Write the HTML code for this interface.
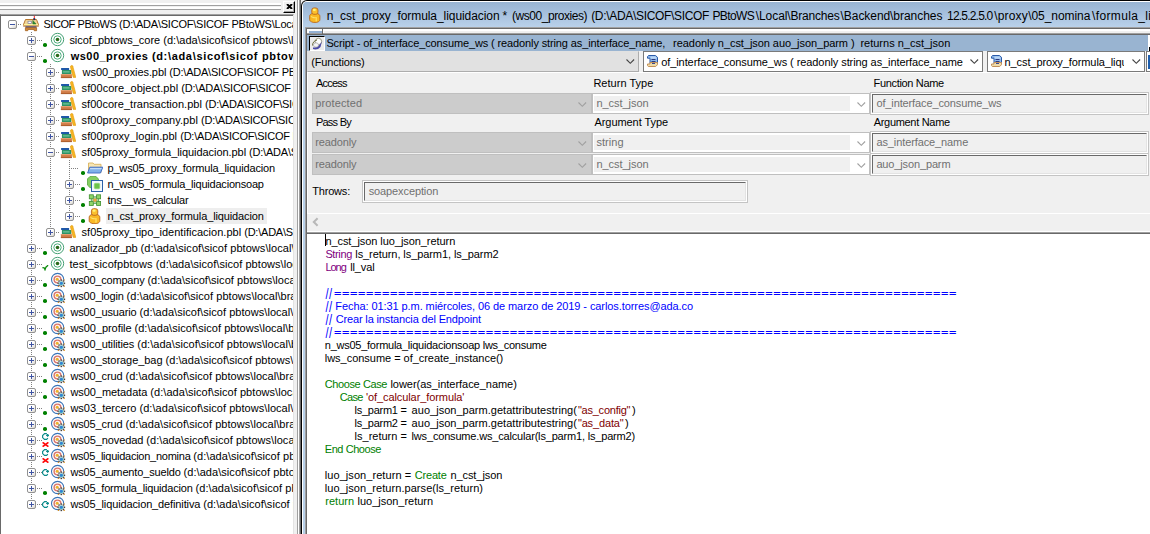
<!DOCTYPE html>
<html lang="es"><head><meta charset="utf-8"><title>PowerBuilder - n_cst_proxy_formula_liquidacion</title>
<style>
html,body{margin:0;padding:0}
body{width:1150px;height:534px;overflow:hidden;position:relative;background:#f0f0f0;font:11px "Liberation Sans",sans-serif;color:#000}
div,svg{position:absolute;box-sizing:border-box}
.t{white-space:pre;line-height:16px;height:16px;font:11px/16px "Liberation Sans",sans-serif}
.b{font-weight:bold}
.s12{font:12px/16px "Liberation Sans",sans-serif}
/* tree */
#tree{left:0;top:14px;width:294px;height:520px;background:#fff;border-top:1px solid #a0a0a0;border-left:1px solid #696969;border-right:1px solid #e3e3e3;overflow:hidden}
#treein{left:-1px;top:-15px;width:294px;height:534px}
.row{left:0;width:293px;height:16px;overflow:hidden}
.ex{width:9px;height:9px;border:1px solid #919191;border-radius:2px;background:linear-gradient(135deg,#fff 0%,#fff 45%,#d9d6cf 100%)}
.ex i{position:absolute;left:1px;top:3px;width:5px;height:1px;background:#3f54a3}
.ex b{position:absolute;left:3px;top:1px;width:1px;height:5px;background:#3f54a3}
.hd{height:1px;background-image:linear-gradient(90deg,#808080 50%,transparent 50%);background-size:2px 1px}
.vd{width:1px;background-image:linear-gradient(180deg,#808080 50%,transparent 50%);background-size:1px 2px}
.dot{width:4px;height:4px;background:#008000;border-radius:1.8px}
.c{line-height:13px;height:13px;font:11px/13px "Liberation Sans",sans-serif}

</style></head>
<body>
<div id="grip" style="left:0;top:0;width:297px;height:14px;background:#f0f0f0"><div style="left:0;top:3px;width:281px;height:3px;background:#fff;border-bottom:1px solid #a0a0a0"></div><div style="left:0;top:7px;width:281px;height:3px;background:#fff;border-bottom:1px solid #a0a0a0"></div><div id="closebtn" style="left:283px;top:1px;width:12px;height:12px;background:#f0f0f0;border-top:1px solid #fff;border-left:1px solid #fff;border-right:1px solid #000;border-bottom:1px solid #000"><div style="left:0;top:0;width:10px;height:10px;border-right:1px solid #a0a0a0;border-bottom:1px solid #a0a0a0"></div><svg style="left:2px;top:2px" width="7" height="5" viewBox="0 0 7 5"><path d="M1 0l5 5M6 0l-5 5" stroke="#000" stroke-width="1.9" fill="none"/></svg></div></div>
<div style="left:297px;top:0;width:1px;height:534px;background:#a0a0a0"></div><div style="left:298px;top:0;width:1px;height:534px;background:#fff"></div><div style="left:299px;top:0;width:1px;height:534px;background:#a0a0a0"></div><div style="left:300px;top:0;width:1px;height:534px;background:#696969"></div>
<div id="tree"><div id="treein">
<div style="left:1px;top:15px;width:292px;height:1px;background:#696969"></div>
<div class="vd" style="left:31px;top:32px;height:472px"></div><div class="vd" style="left:50px;top:64px;height:168px"></div><div class="vd" style="left:69px;top:160px;height:56px"></div>
<div class="hd" style="left:18px;top:24px;width:4px"></div><div class="ex" style="left:8px;top:20px"><i></i></div><svg style="left:22px;top:16px" width="18" height="16" viewBox="0 0 18 16" overflow="visible"><path d="M3.5 3.5h11l2.2 5.6h-15.4z" fill="#f1d596" stroke="#b9772e" stroke-width="1"/><rect x="1.8" y="8" width="14.4" height="1.6" fill="#fdf5a0"/><rect x="1.2" y="9.6" width="15.6" height="1" fill="#b06a28"/><rect x="3.5" y="10.4" width="11" height="1.4" fill="#3a3f7a"/><path d="M3.4 11.8h11.2v2.9h-2.4v-1.2h-6.4v1.2h-2.4z" fill="#d28a3a" stroke="#a5621f" stroke-width="0.8"/><rect x="6" y="5.2" width="3.3" height="2.2" fill="#fff" stroke="#7a7c98" stroke-width="0.7"/><path d="M10.8 8v-3.6l3.3 3.6z" fill="#2f8a3a" stroke="#1f6f1f" stroke-width="0.5"/><rect x="11.8" y="-0.2" width="1" height="2.4" fill="#ff2020"/><rect x="11.3" y="2.1" width="1.9" height="2" fill="#2a2a55"/></svg><div class="t" style="left:43.40px;top:16px"><span style="letter-spacing:-0.431px">SICOF PBtoWS </span><span style="letter-spacing:-0.219px">(D:\ADA\SICOF\SICOF PBtoWS\Local\Branches</span></div>
<div class="hd" style="left:37px;top:40px;width:6px"></div><div class="ex" style="left:27px;top:36px"><i></i><b></b></div><div class="dot" style="left:43px;top:43px"></div><svg style="left:50px;top:32px" width="16" height="16" viewBox="0 0 16 16" ><circle cx="7.5" cy="7.5" r="6.2" fill="#fff" stroke="#3c9b6e" stroke-width="0.95"/><circle cx="7.5" cy="7.5" r="3.7" fill="#fff" stroke="#45aa78" stroke-width="0.95"/><circle cx="7.5" cy="7.5" r="1.8" fill="#2a6a1c"/></svg><div class="t" style="left:69.40px;top:32px"><span style="letter-spacing:-0.021px">sicof_pbtows_core </span><span style="letter-spacing:0.050px">(d:\ada\sicof\sicof pbtows\local\branches\backend</span></div>
<div class="hd" style="left:37px;top:56px;width:6px"></div><div class="ex" style="left:27px;top:52px"><i></i></div><div class="dot" style="left:43px;top:59px"></div><svg style="left:50px;top:48px" width="16" height="16" viewBox="0 0 16 16" ><circle cx="7.5" cy="7.5" r="6.2" fill="#fff" stroke="#3c9b6e" stroke-width="0.95"/><circle cx="7.5" cy="7.5" r="3.7" fill="#fff" stroke="#45aa78" stroke-width="0.95"/><circle cx="7.5" cy="7.5" r="1.8" fill="#2a6a1c"/></svg><div class="t b" style="left:70.80px;top:48px"><span style="letter-spacing:0.452px">ws00_proxies </span><span style="letter-spacing:0.672px">(d:\ada\sicof\sicof pbtows\local\branches\backend</span></div>
<div class="hd" style="left:56px;top:72px;width:4px"></div><div class="ex" style="left:46px;top:68px"><i></i><b></b></div><svg style="left:60px;top:64px" width="16" height="16" viewBox="0 0 16 16" ><g transform="translate(0.6 1)"><rect x="0.5" y="3" width="8" height="2" fill="#1f58a8"/><rect x="1.3" y="5" width="9.4" height="4" fill="#2e9466"/><rect x="2.5" y="6.4" width="6.5" height="1" fill="#7fd0a8"/><rect x="0.3" y="9" width="11" height="4" fill="#cf7a45"/><rect x="0.3" y="9" width="11" height="1.2" fill="#e3a071"/><rect x="0.3" y="12.2" width="11" height="0.9" fill="#a85a2a"/><path d="M10.6 0.6c1.4-0.5 2 0.5 1.8 1.4l2.8 10.4h-2.6l-2.7-10.2c-0.2-0.8 0.1-1.3 0.7-1.6z" fill="#f7b522" stroke="#e09a10" stroke-width="0.6"/></g></svg><div class="t" style="left:82.60px;top:64px"><span style="letter-spacing:-0.080px">ws00_proxies.pbl </span><span style="letter-spacing:-0.219px">(D:\ADA\SICOF\SICOF PBtoWS\Local</span></div>
<div class="hd" style="left:56px;top:88px;width:4px"></div><div class="ex" style="left:46px;top:84px"><i></i><b></b></div><svg style="left:60px;top:80px" width="16" height="16" viewBox="0 0 16 16" ><g transform="translate(0.6 1)"><rect x="0.5" y="3" width="8" height="2" fill="#1f58a8"/><rect x="1.3" y="5" width="9.4" height="4" fill="#2e9466"/><rect x="2.5" y="6.4" width="6.5" height="1" fill="#7fd0a8"/><rect x="0.3" y="9" width="11" height="4" fill="#cf7a45"/><rect x="0.3" y="9" width="11" height="1.2" fill="#e3a071"/><rect x="0.3" y="12.2" width="11" height="0.9" fill="#a85a2a"/><path d="M10.6 0.6c1.4-0.5 2 0.5 1.8 1.4l2.8 10.4h-2.6l-2.7-10.2c-0.2-0.8 0.1-1.3 0.7-1.6z" fill="#f7b522" stroke="#e09a10" stroke-width="0.6"/></g></svg><div class="t" style="left:81.60px;top:80px"><span style="letter-spacing:0.062px">sf00core_object.pbl </span><span style="letter-spacing:-0.219px">(D:\ADA\SICOF\SICOF PBtoWS\Local</span></div>
<div class="hd" style="left:56px;top:104px;width:4px"></div><div class="ex" style="left:46px;top:100px"><i></i><b></b></div><svg style="left:60px;top:96px" width="16" height="16" viewBox="0 0 16 16" ><g transform="translate(0.6 1)"><rect x="0.5" y="3" width="8" height="2" fill="#1f58a8"/><rect x="1.3" y="5" width="9.4" height="4" fill="#2e9466"/><rect x="2.5" y="6.4" width="6.5" height="1" fill="#7fd0a8"/><rect x="0.3" y="9" width="11" height="4" fill="#cf7a45"/><rect x="0.3" y="9" width="11" height="1.2" fill="#e3a071"/><rect x="0.3" y="12.2" width="11" height="0.9" fill="#a85a2a"/><path d="M10.6 0.6c1.4-0.5 2 0.5 1.8 1.4l2.8 10.4h-2.6l-2.7-10.2c-0.2-0.8 0.1-1.3 0.7-1.6z" fill="#f7b522" stroke="#e09a10" stroke-width="0.6"/></g></svg><div class="t" style="left:81.60px;top:96px"><span style="letter-spacing:0.019px">sf00core_transaction.pbl </span><span style="letter-spacing:-0.219px">(D:\ADA\SICOF\SICOF PBtoWS\Local</span></div>
<div class="hd" style="left:56px;top:120px;width:4px"></div><div class="ex" style="left:46px;top:116px"><i></i><b></b></div><svg style="left:60px;top:112px" width="16" height="16" viewBox="0 0 16 16" ><g transform="translate(0.6 1)"><rect x="0.5" y="3" width="8" height="2" fill="#1f58a8"/><rect x="1.3" y="5" width="9.4" height="4" fill="#2e9466"/><rect x="2.5" y="6.4" width="6.5" height="1" fill="#7fd0a8"/><rect x="0.3" y="9" width="11" height="4" fill="#cf7a45"/><rect x="0.3" y="9" width="11" height="1.2" fill="#e3a071"/><rect x="0.3" y="12.2" width="11" height="0.9" fill="#a85a2a"/><path d="M10.6 0.6c1.4-0.5 2 0.5 1.8 1.4l2.8 10.4h-2.6l-2.7-10.2c-0.2-0.8 0.1-1.3 0.7-1.6z" fill="#f7b522" stroke="#e09a10" stroke-width="0.6"/></g></svg><div class="t" style="left:81.60px;top:112px"><span style="letter-spacing:0.044px">sf00proxy_company.pbl </span><span style="letter-spacing:-0.219px">(D:\ADA\SICOF\SICOF PBtoWS\Local</span></div>
<div class="hd" style="left:56px;top:136px;width:4px"></div><div class="ex" style="left:46px;top:132px"><i></i><b></b></div><svg style="left:60px;top:128px" width="16" height="16" viewBox="0 0 16 16" ><g transform="translate(0.6 1)"><rect x="0.5" y="3" width="8" height="2" fill="#1f58a8"/><rect x="1.3" y="5" width="9.4" height="4" fill="#2e9466"/><rect x="2.5" y="6.4" width="6.5" height="1" fill="#7fd0a8"/><rect x="0.3" y="9" width="11" height="4" fill="#cf7a45"/><rect x="0.3" y="9" width="11" height="1.2" fill="#e3a071"/><rect x="0.3" y="12.2" width="11" height="0.9" fill="#a85a2a"/><path d="M10.6 0.6c1.4-0.5 2 0.5 1.8 1.4l2.8 10.4h-2.6l-2.7-10.2c-0.2-0.8 0.1-1.3 0.7-1.6z" fill="#f7b522" stroke="#e09a10" stroke-width="0.6"/></g></svg><div class="t" style="left:81.60px;top:128px"><span style="letter-spacing:0.038px">sf00proxy_login.pbl </span><span style="letter-spacing:-0.219px">(D:\ADA\SICOF\SICOF PBtoWS\Local</span></div>
<div class="hd" style="left:56px;top:152px;width:4px"></div><div class="ex" style="left:46px;top:148px"><i></i></div><svg style="left:60px;top:144px" width="16" height="16" viewBox="0 0 16 16" ><g transform="translate(0.6 1)"><rect x="0.5" y="3" width="8" height="2" fill="#1f58a8"/><rect x="1.3" y="5" width="9.4" height="4" fill="#2e9466"/><rect x="2.5" y="6.4" width="6.5" height="1" fill="#7fd0a8"/><rect x="0.3" y="9" width="11" height="4" fill="#cf7a45"/><rect x="0.3" y="9" width="11" height="1.2" fill="#e3a071"/><rect x="0.3" y="12.2" width="11" height="0.9" fill="#a85a2a"/><path d="M10.6 0.6c1.4-0.5 2 0.5 1.8 1.4l2.8 10.4h-2.6l-2.7-10.2c-0.2-0.8 0.1-1.3 0.7-1.6z" fill="#f7b522" stroke="#e09a10" stroke-width="0.6"/></g></svg><div class="t" style="left:81.60px;top:144px"><span style="letter-spacing:-0.056px">sf05proxy_formula_liquidacion.pbl </span><span style="letter-spacing:-0.219px">(D:\ADA\SICOF\SICOF PBtoWS\Local</span></div>
<div class="hd" style="left:69px;top:168px;width:10px"></div><div class="dot" style="left:81px;top:171px"></div><svg style="left:87px;top:160px" width="16" height="16" viewBox="0 0 16 16" ><path d="M1.5 12.5v-9.5h4.5l1.2 1.3h6.8v8.2z" fill="#f7e6b4" stroke="#d9b25f" stroke-width="0.9"/><path d="M0.6 13l2.2-5.8h13l-2.3 5.8z" fill="#7fb0ea" stroke="#3a66c2" stroke-width="0.9"/><path d="M3.2 8h11.6l-0.5 1.2h-11.6z" fill="#c5dcf7"/></svg><div class="t" style="left:107.4px;top:160px;letter-spacing:-0.129px">p_ws05_proxy_formula_liquidacion</div>
<div class="hd" style="left:75px;top:184px;width:6px"></div><div class="ex" style="left:65px;top:180px"><i></i><b></b></div><div class="dot" style="left:81px;top:187px"></div><svg style="left:87px;top:176px" width="16" height="16" viewBox="0 0 16 16" ><path d="M3 0.4h6l2.4 2.6v6l-2.4 2.6h-6l-2.6-2.6v-6z" fill="#86cf62" stroke="#4fa237" stroke-width="0.8"/><rect x="4.5" y="4.5" width="11" height="11" fill="#f4f8ff" stroke="#2d62a8" stroke-width="1"/><rect x="7.3" y="7.3" width="5.4" height="5.4" rx="1.2" fill="#6cc24a" stroke="#8fd66f" stroke-width="0.8"/></svg><div class="t" style="left:107.4px;top:176px;letter-spacing:-0.212px">n_ws05_formula_liquidacionsoap</div>
<div class="hd" style="left:75px;top:200px;width:6px"></div><div class="ex" style="left:65px;top:196px"><i></i><b></b></div><div class="dot" style="left:81px;top:203px"></div><svg style="left:87px;top:192px" width="16" height="16" viewBox="0 0 16 16" ><path d="M4.3 4.8h7.4M4.3 11.4h7.4M4.3 4.8v6.6M11.6 4.8v6.6M8 4.8v6.6M4.3 8.1h7.4" fill="none" stroke="#4a9a3a" stroke-width="0.8"/><rect x="2.3" y="2.8" width="4" height="4" fill="#8fd46a" stroke="#3f8f2f" stroke-width="0.8"/><rect x="9.6" y="2.8" width="4" height="4" fill="#8fd46a" stroke="#3f8f2f" stroke-width="0.8"/><rect x="2.3" y="9.4" width="4" height="4" fill="#8fd46a" stroke="#3f8f2f" stroke-width="0.8"/><rect x="9.6" y="9.4" width="4" height="4" fill="#8fd46a" stroke="#3f8f2f" stroke-width="0.8"/><rect x="6.8" y="6.9" width="2.4" height="2.4" fill="#f3b13a" stroke="#c9852a" stroke-width="0.5"/></svg><div class="t" style="left:107.4px;top:192px;letter-spacing:-0.214px">tns__ws_calcular</div>
<div class="hd" style="left:75px;top:216px;width:6px"></div><div class="ex" style="left:65px;top:212px"><i></i><b></b></div><div class="dot" style="left:81px;top:219px"></div><svg style="left:87px;top:208px" width="16" height="16" viewBox="0 0 16 16" ><path d="M2.2 9.2c0-1.6 1.6-2.6 3-2.8h4.6c1.6 0.3 3 1.3 3 2.8v3.6c0 1.2-1 2-2 2.4l-1.6 0.5h-3.2l-1.8-0.6c-1.2-0.5-2-1.2-2-2.3z" fill="#f9b824" stroke="#b8651e" stroke-width="0.9"/><path d="M3.4 8.6c1.4 1.6 4 2 6.2 1.4v4.4l-1.2 0.4v-3.6c-2 0.2-3.8-0.3-5-1.5z" fill="#fde26a"/><rect x="4.4" y="0.7" width="6.4" height="6.6" rx="2.2" fill="#fbc02d" stroke="#b8651e" stroke-width="0.9"/><rect x="5.6" y="1.6" width="3" height="2.2" rx="1" fill="#fff27a"/></svg><div style="left:106px;top:208px;width:161px;height:16px;background:#eeeeee"></div><div class="t" style="left:107.4px;top:208px;letter-spacing:-0.123px">n_cst_proxy_formula_liquidacion</div>
<div class="hd" style="left:56px;top:232px;width:4px"></div><div class="ex" style="left:46px;top:228px"><i></i><b></b></div><svg style="left:60px;top:224px" width="16" height="16" viewBox="0 0 16 16" ><g transform="translate(0.6 1)"><rect x="0.5" y="3" width="8" height="2" fill="#1f58a8"/><rect x="1.3" y="5" width="9.4" height="4" fill="#2e9466"/><rect x="2.5" y="6.4" width="6.5" height="1" fill="#7fd0a8"/><rect x="0.3" y="9" width="11" height="4" fill="#cf7a45"/><rect x="0.3" y="9" width="11" height="1.2" fill="#e3a071"/><rect x="0.3" y="12.2" width="11" height="0.9" fill="#a85a2a"/><path d="M10.6 0.6c1.4-0.5 2 0.5 1.8 1.4l2.8 10.4h-2.6l-2.7-10.2c-0.2-0.8 0.1-1.3 0.7-1.6z" fill="#f7b522" stroke="#e09a10" stroke-width="0.6"/></g></svg><div class="t" style="left:81.60px;top:224px"><span style="letter-spacing:0.016px">sf05proxy_tipo_identificacion.pbl </span><span style="letter-spacing:-0.219px">(D:\ADA\SICOF\SICOF PBtoWS\Local</span></div>
<div class="hd" style="left:37px;top:248px;width:6px"></div><div class="ex" style="left:27px;top:244px"><i></i><b></b></div><div class="dot" style="left:43px;top:251px"></div><svg style="left:50px;top:240px" width="16" height="16" viewBox="0 0 16 16" ><circle cx="7.5" cy="7.5" r="6.2" fill="#fff" stroke="#3c9b6e" stroke-width="0.95"/><circle cx="7.5" cy="7.5" r="3.7" fill="#fff" stroke="#45aa78" stroke-width="0.95"/><circle cx="7.5" cy="7.5" r="1.8" fill="#2a6a1c"/></svg><div class="t" style="left:69.40px;top:240px"><span style="letter-spacing:-0.069px">analizador_pb </span><span style="letter-spacing:0.050px">(d:\ada\sicof\sicof pbtows\local\branches\backend</span></div>
<div class="hd" style="left:37px;top:264px;width:6px"></div><div class="ex" style="left:27px;top:260px"><i></i><b></b></div><svg style="left:42px;top:265px" width="7" height="6" viewBox="0 0 7 6" ><path d="M0.4 2.6l1.8 0.2 0.8 2 0.9-2.6 2.2-2" stroke="#0a8a0a" stroke-width="1.2" fill="none"/></svg><svg style="left:50px;top:256px" width="16" height="16" viewBox="0 0 16 16" ><circle cx="7.5" cy="7.5" r="6.2" fill="#fff" stroke="#3c9b6e" stroke-width="0.95"/><circle cx="7.5" cy="7.5" r="3.7" fill="#fff" stroke="#45aa78" stroke-width="0.95"/><circle cx="7.5" cy="7.5" r="1.8" fill="#2a6a1c"/></svg><div class="t" style="left:69.40px;top:256px"><span style="letter-spacing:0.119px">test_sicofpbtows </span><span style="letter-spacing:0.050px">(d:\ada\sicof\sicof pbtows\local\branches\backend</span></div>
<div class="hd" style="left:37px;top:280px;width:6px"></div><div class="ex" style="left:27px;top:276px"><i></i><b></b></div><div class="dot" style="left:43px;top:283px"></div><svg style="left:50px;top:272px" width="16" height="16" viewBox="0 0 16 16" ><circle cx="7.6" cy="7.5" r="6.1" fill="#fff" stroke="#3a74b8" stroke-width="1.1"/><circle cx="7.5" cy="7.5" r="3.4" fill="#fdf1ee" stroke="#d9746a" stroke-width="1.4"/><circle cx="7.2" cy="7.2" r="1.5" fill="#ecb32a"/><g transform="translate(11.3 11.3)"><circle r="3.5" fill="#fff" fill-opacity="0.85"/><rect x="2.30" y="-3.90" width="1.2" height="1.2" fill="#f0a020"/><rect x="-3.50" y="2.50" width="1.2" height="1.2" fill="#f0a020"/><rect x="2.30" y="2.50" width="1.2" height="1.2" fill="#f0a020"/><rect x="2.35" y="-0.75" width="1.5" height="1.5" fill="#3c3c3c"/><rect x="1.44" y="1.44" width="1.5" height="1.5" fill="#4a4040"/><rect x="-0.75" y="2.35" width="1.5" height="1.5" fill="#3c3c3c"/><rect x="-2.94" y="1.44" width="1.5" height="1.5" fill="#4a4040"/><rect x="-3.85" y="-0.75" width="1.5" height="1.5" fill="#3c3c3c"/><rect x="-2.94" y="-2.94" width="1.5" height="1.5" fill="#4a4040"/><rect x="-0.75" y="-3.85" width="1.5" height="1.5" fill="#3c3c3c"/><rect x="1.44" y="-2.94" width="1.5" height="1.5" fill="#4a4040"/><circle r="2.5" fill="#f2f8fa" stroke="#777" stroke-width="0.5"/><circle r="1.9" fill="#3cc0c8"/><circle r="1.2" fill="#3a78d8"/></g></svg><div class="t" style="left:70.40px;top:272px"><span style="letter-spacing:-0.192px">ws00_company </span><span style="letter-spacing:0.050px">(d:\ada\sicof\sicof pbtows\local\branches\backend</span></div>
<div class="hd" style="left:37px;top:296px;width:6px"></div><div class="ex" style="left:27px;top:292px"><i></i><b></b></div><div class="dot" style="left:43px;top:299px"></div><svg style="left:50px;top:288px" width="16" height="16" viewBox="0 0 16 16" ><circle cx="7.6" cy="7.5" r="6.1" fill="#fff" stroke="#3a74b8" stroke-width="1.1"/><circle cx="7.5" cy="7.5" r="3.4" fill="#fdf1ee" stroke="#d9746a" stroke-width="1.4"/><circle cx="7.2" cy="7.2" r="1.5" fill="#ecb32a"/><g transform="translate(11.3 11.3)"><circle r="3.5" fill="#fff" fill-opacity="0.85"/><rect x="2.30" y="-3.90" width="1.2" height="1.2" fill="#f0a020"/><rect x="-3.50" y="2.50" width="1.2" height="1.2" fill="#f0a020"/><rect x="2.30" y="2.50" width="1.2" height="1.2" fill="#f0a020"/><rect x="2.35" y="-0.75" width="1.5" height="1.5" fill="#3c3c3c"/><rect x="1.44" y="1.44" width="1.5" height="1.5" fill="#4a4040"/><rect x="-0.75" y="2.35" width="1.5" height="1.5" fill="#3c3c3c"/><rect x="-2.94" y="1.44" width="1.5" height="1.5" fill="#4a4040"/><rect x="-3.85" y="-0.75" width="1.5" height="1.5" fill="#3c3c3c"/><rect x="-2.94" y="-2.94" width="1.5" height="1.5" fill="#4a4040"/><rect x="-0.75" y="-3.85" width="1.5" height="1.5" fill="#3c3c3c"/><rect x="1.44" y="-2.94" width="1.5" height="1.5" fill="#4a4040"/><circle r="2.5" fill="#f2f8fa" stroke="#777" stroke-width="0.5"/><circle r="1.9" fill="#3cc0c8"/><circle r="1.2" fill="#3a78d8"/></g></svg><div class="t" style="left:70.40px;top:288px"><span style="letter-spacing:-0.172px">ws00_login </span><span style="letter-spacing:0.050px">(d:\ada\sicof\sicof pbtows\local\branches\backend</span></div>
<div class="hd" style="left:37px;top:312px;width:6px"></div><div class="ex" style="left:27px;top:308px"><i></i><b></b></div><div class="dot" style="left:43px;top:315px"></div><svg style="left:50px;top:304px" width="16" height="16" viewBox="0 0 16 16" ><circle cx="7.6" cy="7.5" r="6.1" fill="#fff" stroke="#3a74b8" stroke-width="1.1"/><circle cx="7.5" cy="7.5" r="3.4" fill="#fdf1ee" stroke="#d9746a" stroke-width="1.4"/><circle cx="7.2" cy="7.2" r="1.5" fill="#ecb32a"/><g transform="translate(11.3 11.3)"><circle r="3.5" fill="#fff" fill-opacity="0.85"/><rect x="2.30" y="-3.90" width="1.2" height="1.2" fill="#f0a020"/><rect x="-3.50" y="2.50" width="1.2" height="1.2" fill="#f0a020"/><rect x="2.30" y="2.50" width="1.2" height="1.2" fill="#f0a020"/><rect x="2.35" y="-0.75" width="1.5" height="1.5" fill="#3c3c3c"/><rect x="1.44" y="1.44" width="1.5" height="1.5" fill="#4a4040"/><rect x="-0.75" y="2.35" width="1.5" height="1.5" fill="#3c3c3c"/><rect x="-2.94" y="1.44" width="1.5" height="1.5" fill="#4a4040"/><rect x="-3.85" y="-0.75" width="1.5" height="1.5" fill="#3c3c3c"/><rect x="-2.94" y="-2.94" width="1.5" height="1.5" fill="#4a4040"/><rect x="-0.75" y="-3.85" width="1.5" height="1.5" fill="#3c3c3c"/><rect x="1.44" y="-2.94" width="1.5" height="1.5" fill="#4a4040"/><circle r="2.5" fill="#f2f8fa" stroke="#777" stroke-width="0.5"/><circle r="1.9" fill="#3cc0c8"/><circle r="1.2" fill="#3a78d8"/></g></svg><div class="t" style="left:70.40px;top:304px"><span style="letter-spacing:-0.141px">ws00_usuario </span><span style="letter-spacing:0.050px">(d:\ada\sicof\sicof pbtows\local\branches\backend</span></div>
<div class="hd" style="left:37px;top:328px;width:6px"></div><div class="ex" style="left:27px;top:324px"><i></i><b></b></div><div class="dot" style="left:43px;top:331px"></div><svg style="left:50px;top:320px" width="16" height="16" viewBox="0 0 16 16" ><circle cx="7.6" cy="7.5" r="6.1" fill="#fff" stroke="#3a74b8" stroke-width="1.1"/><circle cx="7.5" cy="7.5" r="3.4" fill="#fdf1ee" stroke="#d9746a" stroke-width="1.4"/><circle cx="7.2" cy="7.2" r="1.5" fill="#ecb32a"/><g transform="translate(11.3 11.3)"><circle r="3.5" fill="#fff" fill-opacity="0.85"/><rect x="2.30" y="-3.90" width="1.2" height="1.2" fill="#f0a020"/><rect x="-3.50" y="2.50" width="1.2" height="1.2" fill="#f0a020"/><rect x="2.30" y="2.50" width="1.2" height="1.2" fill="#f0a020"/><rect x="2.35" y="-0.75" width="1.5" height="1.5" fill="#3c3c3c"/><rect x="1.44" y="1.44" width="1.5" height="1.5" fill="#4a4040"/><rect x="-0.75" y="2.35" width="1.5" height="1.5" fill="#3c3c3c"/><rect x="-2.94" y="1.44" width="1.5" height="1.5" fill="#4a4040"/><rect x="-3.85" y="-0.75" width="1.5" height="1.5" fill="#3c3c3c"/><rect x="-2.94" y="-2.94" width="1.5" height="1.5" fill="#4a4040"/><rect x="-0.75" y="-3.85" width="1.5" height="1.5" fill="#3c3c3c"/><rect x="1.44" y="-2.94" width="1.5" height="1.5" fill="#4a4040"/><circle r="2.5" fill="#f2f8fa" stroke="#777" stroke-width="0.5"/><circle r="1.9" fill="#3cc0c8"/><circle r="1.2" fill="#3a78d8"/></g></svg><div class="t" style="left:70.40px;top:320px"><span style="letter-spacing:-0.056px">ws00_profile </span><span style="letter-spacing:0.050px">(d:\ada\sicof\sicof pbtows\local\branches\backend</span></div>
<div class="hd" style="left:37px;top:344px;width:6px"></div><div class="ex" style="left:27px;top:340px"><i></i><b></b></div><div class="dot" style="left:43px;top:347px"></div><svg style="left:50px;top:336px" width="16" height="16" viewBox="0 0 16 16" ><circle cx="7.6" cy="7.5" r="6.1" fill="#fff" stroke="#3a74b8" stroke-width="1.1"/><circle cx="7.5" cy="7.5" r="3.4" fill="#fdf1ee" stroke="#d9746a" stroke-width="1.4"/><circle cx="7.2" cy="7.2" r="1.5" fill="#ecb32a"/><g transform="translate(11.3 11.3)"><circle r="3.5" fill="#fff" fill-opacity="0.85"/><rect x="2.30" y="-3.90" width="1.2" height="1.2" fill="#f0a020"/><rect x="-3.50" y="2.50" width="1.2" height="1.2" fill="#f0a020"/><rect x="2.30" y="2.50" width="1.2" height="1.2" fill="#f0a020"/><rect x="2.35" y="-0.75" width="1.5" height="1.5" fill="#3c3c3c"/><rect x="1.44" y="1.44" width="1.5" height="1.5" fill="#4a4040"/><rect x="-0.75" y="2.35" width="1.5" height="1.5" fill="#3c3c3c"/><rect x="-2.94" y="1.44" width="1.5" height="1.5" fill="#4a4040"/><rect x="-3.85" y="-0.75" width="1.5" height="1.5" fill="#3c3c3c"/><rect x="-2.94" y="-2.94" width="1.5" height="1.5" fill="#4a4040"/><rect x="-0.75" y="-3.85" width="1.5" height="1.5" fill="#3c3c3c"/><rect x="1.44" y="-2.94" width="1.5" height="1.5" fill="#4a4040"/><circle r="2.5" fill="#f2f8fa" stroke="#777" stroke-width="0.5"/><circle r="1.9" fill="#3cc0c8"/><circle r="1.2" fill="#3a78d8"/></g></svg><div class="t" style="left:70.40px;top:336px"><span style="letter-spacing:-0.112px">ws00_utilities </span><span style="letter-spacing:0.050px">(d:\ada\sicof\sicof pbtows\local\branches\backend</span></div>
<div class="hd" style="left:37px;top:360px;width:6px"></div><div class="ex" style="left:27px;top:356px"><i></i><b></b></div><div class="dot" style="left:43px;top:363px"></div><svg style="left:50px;top:352px" width="16" height="16" viewBox="0 0 16 16" ><circle cx="7.6" cy="7.5" r="6.1" fill="#fff" stroke="#3a74b8" stroke-width="1.1"/><circle cx="7.5" cy="7.5" r="3.4" fill="#fdf1ee" stroke="#d9746a" stroke-width="1.4"/><circle cx="7.2" cy="7.2" r="1.5" fill="#ecb32a"/><g transform="translate(11.3 11.3)"><circle r="3.5" fill="#fff" fill-opacity="0.85"/><rect x="2.30" y="-3.90" width="1.2" height="1.2" fill="#f0a020"/><rect x="-3.50" y="2.50" width="1.2" height="1.2" fill="#f0a020"/><rect x="2.30" y="2.50" width="1.2" height="1.2" fill="#f0a020"/><rect x="2.35" y="-0.75" width="1.5" height="1.5" fill="#3c3c3c"/><rect x="1.44" y="1.44" width="1.5" height="1.5" fill="#4a4040"/><rect x="-0.75" y="2.35" width="1.5" height="1.5" fill="#3c3c3c"/><rect x="-2.94" y="1.44" width="1.5" height="1.5" fill="#4a4040"/><rect x="-3.85" y="-0.75" width="1.5" height="1.5" fill="#3c3c3c"/><rect x="-2.94" y="-2.94" width="1.5" height="1.5" fill="#4a4040"/><rect x="-0.75" y="-3.85" width="1.5" height="1.5" fill="#3c3c3c"/><rect x="1.44" y="-2.94" width="1.5" height="1.5" fill="#4a4040"/><circle r="2.5" fill="#f2f8fa" stroke="#777" stroke-width="0.5"/><circle r="1.9" fill="#3cc0c8"/><circle r="1.2" fill="#3a78d8"/></g></svg><div class="t" style="left:70.40px;top:352px"><span style="letter-spacing:-0.054px">ws00_storage_bag </span><span style="letter-spacing:0.050px">(d:\ada\sicof\sicof pbtows\local\branches\backend</span></div>
<div class="hd" style="left:37px;top:376px;width:6px"></div><div class="ex" style="left:27px;top:372px"><i></i><b></b></div><div class="dot" style="left:43px;top:379px"></div><svg style="left:50px;top:368px" width="16" height="16" viewBox="0 0 16 16" ><circle cx="7.6" cy="7.5" r="6.1" fill="#fff" stroke="#3a74b8" stroke-width="1.1"/><circle cx="7.5" cy="7.5" r="3.4" fill="#fdf1ee" stroke="#d9746a" stroke-width="1.4"/><circle cx="7.2" cy="7.2" r="1.5" fill="#ecb32a"/><g transform="translate(11.3 11.3)"><circle r="3.5" fill="#fff" fill-opacity="0.85"/><rect x="2.30" y="-3.90" width="1.2" height="1.2" fill="#f0a020"/><rect x="-3.50" y="2.50" width="1.2" height="1.2" fill="#f0a020"/><rect x="2.30" y="2.50" width="1.2" height="1.2" fill="#f0a020"/><rect x="2.35" y="-0.75" width="1.5" height="1.5" fill="#3c3c3c"/><rect x="1.44" y="1.44" width="1.5" height="1.5" fill="#4a4040"/><rect x="-0.75" y="2.35" width="1.5" height="1.5" fill="#3c3c3c"/><rect x="-2.94" y="1.44" width="1.5" height="1.5" fill="#4a4040"/><rect x="-3.85" y="-0.75" width="1.5" height="1.5" fill="#3c3c3c"/><rect x="-2.94" y="-2.94" width="1.5" height="1.5" fill="#4a4040"/><rect x="-0.75" y="-3.85" width="1.5" height="1.5" fill="#3c3c3c"/><rect x="1.44" y="-2.94" width="1.5" height="1.5" fill="#4a4040"/><circle r="2.5" fill="#f2f8fa" stroke="#777" stroke-width="0.5"/><circle r="1.9" fill="#3cc0c8"/><circle r="1.2" fill="#3a78d8"/></g></svg><div class="t" style="left:70.40px;top:368px"><span style="letter-spacing:-0.117px">ws00_crud </span><span style="letter-spacing:0.050px">(d:\ada\sicof\sicof pbtows\local\branches\backend</span></div>
<div class="hd" style="left:37px;top:392px;width:6px"></div><div class="ex" style="left:27px;top:388px"><i></i><b></b></div><div class="dot" style="left:43px;top:395px"></div><svg style="left:50px;top:384px" width="16" height="16" viewBox="0 0 16 16" ><circle cx="7.6" cy="7.5" r="6.1" fill="#fff" stroke="#3a74b8" stroke-width="1.1"/><circle cx="7.5" cy="7.5" r="3.4" fill="#fdf1ee" stroke="#d9746a" stroke-width="1.4"/><circle cx="7.2" cy="7.2" r="1.5" fill="#ecb32a"/><g transform="translate(11.3 11.3)"><circle r="3.5" fill="#fff" fill-opacity="0.85"/><rect x="2.30" y="-3.90" width="1.2" height="1.2" fill="#f0a020"/><rect x="-3.50" y="2.50" width="1.2" height="1.2" fill="#f0a020"/><rect x="2.30" y="2.50" width="1.2" height="1.2" fill="#f0a020"/><rect x="2.35" y="-0.75" width="1.5" height="1.5" fill="#3c3c3c"/><rect x="1.44" y="1.44" width="1.5" height="1.5" fill="#4a4040"/><rect x="-0.75" y="2.35" width="1.5" height="1.5" fill="#3c3c3c"/><rect x="-2.94" y="1.44" width="1.5" height="1.5" fill="#4a4040"/><rect x="-3.85" y="-0.75" width="1.5" height="1.5" fill="#3c3c3c"/><rect x="-2.94" y="-2.94" width="1.5" height="1.5" fill="#4a4040"/><rect x="-0.75" y="-3.85" width="1.5" height="1.5" fill="#3c3c3c"/><rect x="1.44" y="-2.94" width="1.5" height="1.5" fill="#4a4040"/><circle r="2.5" fill="#f2f8fa" stroke="#777" stroke-width="0.5"/><circle r="1.9" fill="#3cc0c8"/><circle r="1.2" fill="#3a78d8"/></g></svg><div class="t" style="left:70.40px;top:384px"><span style="letter-spacing:-0.058px">ws00_metadata </span><span style="letter-spacing:0.050px">(d:\ada\sicof\sicof pbtows\local\branches\backend</span></div>
<div class="hd" style="left:37px;top:408px;width:6px"></div><div class="ex" style="left:27px;top:404px"><i></i><b></b></div><div class="dot" style="left:43px;top:411px"></div><svg style="left:50px;top:400px" width="16" height="16" viewBox="0 0 16 16" ><circle cx="7.6" cy="7.5" r="6.1" fill="#fff" stroke="#3a74b8" stroke-width="1.1"/><circle cx="7.5" cy="7.5" r="3.4" fill="#fdf1ee" stroke="#d9746a" stroke-width="1.4"/><circle cx="7.2" cy="7.2" r="1.5" fill="#ecb32a"/><g transform="translate(11.3 11.3)"><circle r="3.5" fill="#fff" fill-opacity="0.85"/><rect x="2.30" y="-3.90" width="1.2" height="1.2" fill="#f0a020"/><rect x="-3.50" y="2.50" width="1.2" height="1.2" fill="#f0a020"/><rect x="2.30" y="2.50" width="1.2" height="1.2" fill="#f0a020"/><rect x="2.35" y="-0.75" width="1.5" height="1.5" fill="#3c3c3c"/><rect x="1.44" y="1.44" width="1.5" height="1.5" fill="#4a4040"/><rect x="-0.75" y="2.35" width="1.5" height="1.5" fill="#3c3c3c"/><rect x="-2.94" y="1.44" width="1.5" height="1.5" fill="#4a4040"/><rect x="-3.85" y="-0.75" width="1.5" height="1.5" fill="#3c3c3c"/><rect x="-2.94" y="-2.94" width="1.5" height="1.5" fill="#4a4040"/><rect x="-0.75" y="-3.85" width="1.5" height="1.5" fill="#3c3c3c"/><rect x="1.44" y="-2.94" width="1.5" height="1.5" fill="#4a4040"/><circle r="2.5" fill="#f2f8fa" stroke="#777" stroke-width="0.5"/><circle r="1.9" fill="#3cc0c8"/><circle r="1.2" fill="#3a78d8"/></g></svg><div class="t" style="left:70.40px;top:400px"><span style="letter-spacing:0.000px">ws03_tercero </span><span style="letter-spacing:0.050px">(d:\ada\sicof\sicof pbtows\local\branches\backend</span></div>
<div class="hd" style="left:37px;top:424px;width:6px"></div><div class="ex" style="left:27px;top:420px"><i></i><b></b></div><div class="dot" style="left:43px;top:427px"></div><svg style="left:50px;top:416px" width="16" height="16" viewBox="0 0 16 16" ><circle cx="7.6" cy="7.5" r="6.1" fill="#fff" stroke="#3a74b8" stroke-width="1.1"/><circle cx="7.5" cy="7.5" r="3.4" fill="#fdf1ee" stroke="#d9746a" stroke-width="1.4"/><circle cx="7.2" cy="7.2" r="1.5" fill="#ecb32a"/><g transform="translate(11.3 11.3)"><circle r="3.5" fill="#fff" fill-opacity="0.85"/><rect x="2.30" y="-3.90" width="1.2" height="1.2" fill="#f0a020"/><rect x="-3.50" y="2.50" width="1.2" height="1.2" fill="#f0a020"/><rect x="2.30" y="2.50" width="1.2" height="1.2" fill="#f0a020"/><rect x="2.35" y="-0.75" width="1.5" height="1.5" fill="#3c3c3c"/><rect x="1.44" y="1.44" width="1.5" height="1.5" fill="#4a4040"/><rect x="-0.75" y="2.35" width="1.5" height="1.5" fill="#3c3c3c"/><rect x="-2.94" y="1.44" width="1.5" height="1.5" fill="#4a4040"/><rect x="-3.85" y="-0.75" width="1.5" height="1.5" fill="#3c3c3c"/><rect x="-2.94" y="-2.94" width="1.5" height="1.5" fill="#4a4040"/><rect x="-0.75" y="-3.85" width="1.5" height="1.5" fill="#3c3c3c"/><rect x="1.44" y="-2.94" width="1.5" height="1.5" fill="#4a4040"/><circle r="2.5" fill="#f2f8fa" stroke="#777" stroke-width="0.5"/><circle r="1.9" fill="#3cc0c8"/><circle r="1.2" fill="#3a78d8"/></g></svg><div class="t" style="left:70.40px;top:416px"><span style="letter-spacing:-0.117px">ws05_crud </span><span style="letter-spacing:0.050px">(d:\ada\sicof\sicof pbtows\local\branches\backend</span></div>
<div class="hd" style="left:37px;top:440px;width:6px"></div><div class="ex" style="left:27px;top:436px"><i></i><b></b></div><svg style="left:42px;top:433px" width="7" height="7" viewBox="0 0 7 7" ><path d="M4.9 0.6H2.6L0.6 2.5V4.6L2.5 6.4H4.6L5.9 5.1" fill="none" stroke="#0a8a8a" stroke-width="1.15"/><path d="M4.1 2.4h2.9M5.6 1v2.8" stroke="#0a8a8a" stroke-width="1.3" fill="none"/></svg><svg style="left:42px;top:442px" width="7" height="5" viewBox="0 0 7 5" ><path d="M0.6 0.4L6.4 4.6M6.4 0.4L0.6 4.6" stroke="#ff0808" stroke-width="1.7" fill="none"/></svg><svg style="left:50px;top:432px" width="16" height="16" viewBox="0 0 16 16" ><circle cx="7.6" cy="7.5" r="6.1" fill="#fff" stroke="#3a74b8" stroke-width="1.1"/><circle cx="7.5" cy="7.5" r="3.4" fill="#fdf1ee" stroke="#d9746a" stroke-width="1.4"/><circle cx="7.2" cy="7.2" r="1.5" fill="#ecb32a"/><g transform="translate(11.3 11.3)"><circle r="3.5" fill="#fff" fill-opacity="0.85"/><rect x="2.30" y="-3.90" width="1.2" height="1.2" fill="#f0a020"/><rect x="-3.50" y="2.50" width="1.2" height="1.2" fill="#f0a020"/><rect x="2.30" y="2.50" width="1.2" height="1.2" fill="#f0a020"/><rect x="2.35" y="-0.75" width="1.5" height="1.5" fill="#3c3c3c"/><rect x="1.44" y="1.44" width="1.5" height="1.5" fill="#4a4040"/><rect x="-0.75" y="2.35" width="1.5" height="1.5" fill="#3c3c3c"/><rect x="-2.94" y="1.44" width="1.5" height="1.5" fill="#4a4040"/><rect x="-3.85" y="-0.75" width="1.5" height="1.5" fill="#3c3c3c"/><rect x="-2.94" y="-2.94" width="1.5" height="1.5" fill="#4a4040"/><rect x="-0.75" y="-3.85" width="1.5" height="1.5" fill="#3c3c3c"/><rect x="1.44" y="-2.94" width="1.5" height="1.5" fill="#4a4040"/><circle r="2.5" fill="#f2f8fa" stroke="#777" stroke-width="0.5"/><circle r="1.9" fill="#3cc0c8"/><circle r="1.2" fill="#3a78d8"/></g></svg><div class="t" style="left:70.40px;top:432px"><span style="letter-spacing:-0.089px">ws05_novedad </span><span style="letter-spacing:0.050px">(d:\ada\sicof\sicof pbtows\local\branches\backend</span></div>
<div class="hd" style="left:37px;top:456px;width:6px"></div><div class="ex" style="left:27px;top:452px"><i></i><b></b></div><svg style="left:42px;top:449px" width="7" height="7" viewBox="0 0 7 7" ><path d="M4.9 0.6H2.6L0.6 2.5V4.6L2.5 6.4H4.6L5.9 5.1" fill="none" stroke="#0a8a8a" stroke-width="1.15"/><path d="M4.1 2.4h2.9M5.6 1v2.8" stroke="#0a8a8a" stroke-width="1.3" fill="none"/></svg><svg style="left:42px;top:458px" width="7" height="5" viewBox="0 0 7 5" ><path d="M0.6 0.4L6.4 4.6M6.4 0.4L0.6 4.6" stroke="#ff0808" stroke-width="1.7" fill="none"/></svg><svg style="left:50px;top:448px" width="16" height="16" viewBox="0 0 16 16" ><circle cx="7.6" cy="7.5" r="6.1" fill="#fff" stroke="#3a74b8" stroke-width="1.1"/><circle cx="7.5" cy="7.5" r="3.4" fill="#fdf1ee" stroke="#d9746a" stroke-width="1.4"/><circle cx="7.2" cy="7.2" r="1.5" fill="#ecb32a"/><g transform="translate(11.3 11.3)"><circle r="3.5" fill="#fff" fill-opacity="0.85"/><rect x="2.30" y="-3.90" width="1.2" height="1.2" fill="#f0a020"/><rect x="-3.50" y="2.50" width="1.2" height="1.2" fill="#f0a020"/><rect x="2.30" y="2.50" width="1.2" height="1.2" fill="#f0a020"/><rect x="2.35" y="-0.75" width="1.5" height="1.5" fill="#3c3c3c"/><rect x="1.44" y="1.44" width="1.5" height="1.5" fill="#4a4040"/><rect x="-0.75" y="2.35" width="1.5" height="1.5" fill="#3c3c3c"/><rect x="-2.94" y="1.44" width="1.5" height="1.5" fill="#4a4040"/><rect x="-3.85" y="-0.75" width="1.5" height="1.5" fill="#3c3c3c"/><rect x="-2.94" y="-2.94" width="1.5" height="1.5" fill="#4a4040"/><rect x="-0.75" y="-3.85" width="1.5" height="1.5" fill="#3c3c3c"/><rect x="1.44" y="-2.94" width="1.5" height="1.5" fill="#4a4040"/><circle r="2.5" fill="#f2f8fa" stroke="#777" stroke-width="0.5"/><circle r="1.9" fill="#3cc0c8"/><circle r="1.2" fill="#3a78d8"/></g></svg><div class="t" style="left:70.40px;top:448px"><span style="letter-spacing:-0.255px">ws05_liquidacion_nomina </span><span style="letter-spacing:0.050px">(d:\ada\sicof\sicof pbtows\local\branches\backend</span></div>
<div class="hd" style="left:37px;top:472px;width:6px"></div><div class="ex" style="left:27px;top:468px"><i></i><b></b></div><svg style="left:42px;top:468.6px" width="7" height="7" viewBox="0 0 7 7" ><path d="M4.9 0.6H2.6L0.6 2.5V4.6L2.5 6.4H4.6L5.9 5.1" fill="none" stroke="#0a8a8a" stroke-width="1.15"/><path d="M4.1 2.4h2.9M5.6 1v2.8" stroke="#0a8a8a" stroke-width="1.3" fill="none"/></svg><svg style="left:50px;top:464px" width="16" height="16" viewBox="0 0 16 16" ><circle cx="7.6" cy="7.5" r="6.1" fill="#fff" stroke="#3a74b8" stroke-width="1.1"/><circle cx="7.5" cy="7.5" r="3.4" fill="#fdf1ee" stroke="#d9746a" stroke-width="1.4"/><circle cx="7.2" cy="7.2" r="1.5" fill="#ecb32a"/><g transform="translate(11.3 11.3)"><circle r="3.5" fill="#fff" fill-opacity="0.85"/><rect x="2.30" y="-3.90" width="1.2" height="1.2" fill="#f0a020"/><rect x="-3.50" y="2.50" width="1.2" height="1.2" fill="#f0a020"/><rect x="2.30" y="2.50" width="1.2" height="1.2" fill="#f0a020"/><rect x="2.35" y="-0.75" width="1.5" height="1.5" fill="#3c3c3c"/><rect x="1.44" y="1.44" width="1.5" height="1.5" fill="#4a4040"/><rect x="-0.75" y="2.35" width="1.5" height="1.5" fill="#3c3c3c"/><rect x="-2.94" y="1.44" width="1.5" height="1.5" fill="#4a4040"/><rect x="-3.85" y="-0.75" width="1.5" height="1.5" fill="#3c3c3c"/><rect x="-2.94" y="-2.94" width="1.5" height="1.5" fill="#4a4040"/><rect x="-0.75" y="-3.85" width="1.5" height="1.5" fill="#3c3c3c"/><rect x="1.44" y="-2.94" width="1.5" height="1.5" fill="#4a4040"/><circle r="2.5" fill="#f2f8fa" stroke="#777" stroke-width="0.5"/><circle r="1.9" fill="#3cc0c8"/><circle r="1.2" fill="#3a78d8"/></g></svg><div class="t" style="left:70.40px;top:464px"><span style="letter-spacing:-0.150px">ws05_aumento_sueldo </span><span style="letter-spacing:0.050px">(d:\ada\sicof\sicof pbtows\local\branches\backend</span></div>
<div class="hd" style="left:37px;top:488px;width:6px"></div><div class="ex" style="left:27px;top:484px"><i></i><b></b></div><div class="dot" style="left:43px;top:491px"></div><svg style="left:50px;top:480px" width="16" height="16" viewBox="0 0 16 16" ><circle cx="7.6" cy="7.5" r="6.1" fill="#fff" stroke="#3a74b8" stroke-width="1.1"/><circle cx="7.5" cy="7.5" r="3.4" fill="#fdf1ee" stroke="#d9746a" stroke-width="1.4"/><circle cx="7.2" cy="7.2" r="1.5" fill="#ecb32a"/><g transform="translate(11.3 11.3)"><circle r="3.5" fill="#fff" fill-opacity="0.85"/><rect x="2.30" y="-3.90" width="1.2" height="1.2" fill="#f0a020"/><rect x="-3.50" y="2.50" width="1.2" height="1.2" fill="#f0a020"/><rect x="2.30" y="2.50" width="1.2" height="1.2" fill="#f0a020"/><rect x="2.35" y="-0.75" width="1.5" height="1.5" fill="#3c3c3c"/><rect x="1.44" y="1.44" width="1.5" height="1.5" fill="#4a4040"/><rect x="-0.75" y="2.35" width="1.5" height="1.5" fill="#3c3c3c"/><rect x="-2.94" y="1.44" width="1.5" height="1.5" fill="#4a4040"/><rect x="-3.85" y="-0.75" width="1.5" height="1.5" fill="#3c3c3c"/><rect x="-2.94" y="-2.94" width="1.5" height="1.5" fill="#4a4040"/><rect x="-0.75" y="-3.85" width="1.5" height="1.5" fill="#3c3c3c"/><rect x="1.44" y="-2.94" width="1.5" height="1.5" fill="#4a4040"/><circle r="2.5" fill="#f2f8fa" stroke="#777" stroke-width="0.5"/><circle r="1.9" fill="#3cc0c8"/><circle r="1.2" fill="#3a78d8"/></g></svg><div class="t" style="left:70.40px;top:480px"><span style="letter-spacing:-0.178px">ws05_formula_liquidacion </span><span style="letter-spacing:0.050px">(d:\ada\sicof\sicof pbtows\local\branches\backend</span></div>
<div class="hd" style="left:37px;top:504px;width:6px"></div><div class="ex" style="left:27px;top:500px"><i></i><b></b></div><svg style="left:42px;top:500.6px" width="7" height="7" viewBox="0 0 7 7" ><path d="M4.9 0.6H2.6L0.6 2.5V4.6L2.5 6.4H4.6L5.9 5.1" fill="none" stroke="#0a8a8a" stroke-width="1.15"/><path d="M4.1 2.4h2.9M5.6 1v2.8" stroke="#0a8a8a" stroke-width="1.3" fill="none"/></svg><svg style="left:50px;top:496px" width="16" height="16" viewBox="0 0 16 16" ><circle cx="7.6" cy="7.5" r="6.1" fill="#fff" stroke="#3a74b8" stroke-width="1.1"/><circle cx="7.5" cy="7.5" r="3.4" fill="#fdf1ee" stroke="#d9746a" stroke-width="1.4"/><circle cx="7.2" cy="7.2" r="1.5" fill="#ecb32a"/><g transform="translate(11.3 11.3)"><circle r="3.5" fill="#fff" fill-opacity="0.85"/><rect x="2.30" y="-3.90" width="1.2" height="1.2" fill="#f0a020"/><rect x="-3.50" y="2.50" width="1.2" height="1.2" fill="#f0a020"/><rect x="2.30" y="2.50" width="1.2" height="1.2" fill="#f0a020"/><rect x="2.35" y="-0.75" width="1.5" height="1.5" fill="#3c3c3c"/><rect x="1.44" y="1.44" width="1.5" height="1.5" fill="#4a4040"/><rect x="-0.75" y="2.35" width="1.5" height="1.5" fill="#3c3c3c"/><rect x="-2.94" y="1.44" width="1.5" height="1.5" fill="#4a4040"/><rect x="-3.85" y="-0.75" width="1.5" height="1.5" fill="#3c3c3c"/><rect x="-2.94" y="-2.94" width="1.5" height="1.5" fill="#4a4040"/><rect x="-0.75" y="-3.85" width="1.5" height="1.5" fill="#3c3c3c"/><rect x="1.44" y="-2.94" width="1.5" height="1.5" fill="#4a4040"/><circle r="2.5" fill="#f2f8fa" stroke="#777" stroke-width="0.5"/><circle r="1.9" fill="#3cc0c8"/><circle r="1.2" fill="#3a78d8"/></g></svg><div class="t" style="left:70.40px;top:496px"><span style="letter-spacing:-0.128px">ws05_liquidacion_definitiva </span><span style="letter-spacing:0.050px">(d:\ada\sicof\sicof pbtows\local\branches\backend</span></div>
</div></div>
<div id="win" style="left:301px;top:0;width:849px;height:534px;background:#000;border-top-left-radius:6px;overflow:hidden"><div style="left:1px;top:1px;width:848px;height:533px;background:#fff;border-top-left-radius:5px;overflow:hidden"><div style="left:1px;top:1px;width:847px;height:532px;background:#b9d1ea;border-top-left-radius:4px;overflow:hidden"><div style="left:0;top:0;width:847px;height:25px;background:linear-gradient(180deg,#98b4d2 0%,#a6c0dd 45%,#b9d1ea 100%)"></div></div></div></div>
<svg style="left:308px;top:7px" width="14" height="16" viewBox="0.5 0 14.5 16" ><path d="M2.2 9.2c0-1.6 1.6-2.6 3-2.8h4.6c1.6 0.3 3 1.3 3 2.8v3.6c0 1.2-1 2-2 2.4l-1.6 0.5h-3.2l-1.8-0.6c-1.2-0.5-2-1.2-2-2.3z" fill="#f9b824" stroke="#b8651e" stroke-width="0.9"/><path d="M3.4 8.6c1.4 1.6 4 2 6.2 1.4v4.4l-1.2 0.4v-3.6c-2 0.2-3.8-0.3-5-1.5z" fill="#fde26a"/><rect x="4.4" y="0.7" width="6.4" height="6.6" rx="2.2" fill="#fbc02d" stroke="#b8651e" stroke-width="0.9"/><rect x="5.6" y="1.6" width="3" height="2.2" rx="1" fill="#fff27a"/></svg><div id="wtitle" style="left:303px;top:2px;width:847px;height:25px;overflow:hidden"><div class="t s12" style="left:23.80px;top:6px;letter-spacing:-0.064px">n_cst_proxy_formula_liquidacion</div><div class="t s12" style="left:208.90px;top:6px;letter-spacing:-0.437px">(ws00_proxies)</div><div class="t s12" style="left:288.20px;top:6px;letter-spacing:-0.321px">(D:\ADA\SICOF\SICOF</div><div class="t s12" style="left:409.40px;top:6px;letter-spacing:-0.611px">PBtoWS</div><div class="t s12" style="left:452.70px;top:6px;letter-spacing:-0.053px">\Local</div><div class="t s12" style="left:484.30px;top:6px;letter-spacing:-0.204px">\Branches</div><div class="t s12" style="left:537.50px;top:6px;letter-spacing:-0.039px">\Backend</div><div class="t s12" style="left:587.00px;top:6px;letter-spacing:-0.025px">\branches</div><div class="t s12" style="left:644.00px;top:6px;letter-spacing:-0.791px">12.5.2.5.0</div><div class="t s12" style="left:691.20px;top:6px;letter-spacing:0.163px">\proxy</div><div class="t s12" style="left:725.20px;top:6px;letter-spacing:-0.061px">\05_nomina</div><div class="t s12" style="left:789.00px;top:6px;letter-spacing:0.361px">\formula_li</div><div class="t s12" style="left:199.39999999999998px;top:6px">*</div></div>
<div id="client" style="left:305px;top:27px;width:845px;height:507px;background:#f0f0f0;border-left:1px solid #a0a0a0;border-top:1px solid #a0a0a0;overflow:hidden"><div id="clientin" style="left:-306px;top:-28px;width:1150px;height:534px">
<div style="left:306px;top:28px;width:844px;height:1px;background:#696969"></div><div style="left:306px;top:28px;width:1px;height:506px;background:#696969"></div>
<div style="left:307px;top:29px;width:843px;height:2px;background:#fff"></div><div style="left:307px;top:31px;width:2px;height:2px;background:#fff"></div><div style="left:309px;top:31px;width:13px;height:2px;background:#95b2d4"></div><div style="left:323px;top:31px;width:1px;height:2px;background:#fff"></div><div style="left:307px;top:33px;width:843px;height:1px;background:#a0a0a0"></div><div style="left:307px;top:34px;width:843px;height:1px;background:#696969"></div><div style="left:322px;top:29px;width:1px;height:5px;background:#696969"></div>
<div id="stitle" style="left:307px;top:35px;width:841px;height:16px;background:#99b4d1"></div><div style="left:1148px;top:35px;width:2px;height:16px;background:#fff"></div><div style="left:1149px;top:47px;width:1px;height:4px;background:#000"></div><div style="left:309px;top:36px;width:16px;height:15px;background:#ececec;border-top:1px solid #000;border-left:1px solid #000;border-right:1px solid #fff;border-bottom:1px solid #fff"></div><svg style="left:311px;top:37px" width="13" height="13" viewBox="0 0 13 13" ><circle cx="7.5" cy="4.5" r="3.2" fill="#fff" stroke="#8a8a6a" stroke-width="0.8"/><path d="M1.5 8.5c0-3 2-5 4.5-5.5" fill="none" stroke="#6b6b3a" stroke-width="1"/><path d="M2 10.5c3 0.5 7-2 9-6.5l-1.5 6c-2 2.5-5.5 3-7.5 2z" fill="#4a4aa8"/><ellipse cx="5" cy="8" rx="2.6" ry="2.2" fill="#f4f4f4" stroke="#9a9a9a" stroke-width="0.6"/></svg><div class="t" style="left:326.4px;top:35px;letter-spacing:-0.123px">Script - of_interface_consume_ws ( readonly string as_interface_name,</div><div class="t" style="left:673.1px;top:35px;letter-spacing:-0.056px">readonly n_cst_json auo_json_parm )</div><div class="t" style="left:860.4px;top:35px;letter-spacing:0.002px">returns n_cst_json</div>
<div style="left:307px;top:51px;width:332px;height:21px;background:#e1e1e1;border:1px solid #adadad;border-top-color:#e1e1e1;border-left-color:#e1e1e1"></div><div class="t" style="left:311.2px;top:54px;letter-spacing:-0.157px">(Functions)</div><svg style="left:626px;top:59px" width="9" height="6" viewBox="0 0 9 6" ><path d="M0.5 0.5l3.8 3.8 3.8-3.8" fill="none" stroke="#444" stroke-width="1.1"/></svg><div style="left:643px;top:51px;width:340px;height:21px;background:#fff;border:1px solid #7a7a7a"></div><svg style="left:647px;top:55px" width="11" height="12" viewBox="0 0 11 12" ><path d="M1.5 0.5h7l2 1.8v6.2h-7.5v-5.3h-2.5v-1.5z" fill="#8fb8ea" stroke="#2a5aa8" stroke-width="1"/><path d="M3.6 1.4h4.6l1.4 1.3v1h-6z" fill="#b9d6f6"/><path d="M4.5 4.5h4M4.5 6.5h4" stroke="#2a3a80" stroke-width="1"/><path d="M3 7.5h7.5v2.2l-1.8 1.8h-7.4l-0.8-1v-1.5h2.5z" fill="#f0dca8" stroke="#c2915a" stroke-width="1"/><path d="M5 8.5h3" stroke="#3a4a90" stroke-width="1"/></svg><div class="t" style="left:661.2px;top:54px;letter-spacing:-0.08px">of_interface_consume_ws ( readonly string as_interface_name</div><svg style="left:970px;top:59px" width="9" height="6" viewBox="0 0 9 6" ><path d="M0.5 0.5l3.8 3.8 3.8-3.8" fill="none" stroke="#444" stroke-width="1.1"/></svg><div style="left:987px;top:51px;width:158px;height:21px;background:#fff;border:1px solid #7a7a7a"></div><svg style="left:991px;top:55px" width="11" height="12" viewBox="0 0 11 12" ><path d="M1.5 0.5h7l2 1.8v6.2h-7.5v-5.3h-2.5v-1.5z" fill="#8fb8ea" stroke="#2a5aa8" stroke-width="1"/><path d="M3.6 1.4h4.6l1.4 1.3v1h-6z" fill="#b9d6f6"/><path d="M4.5 4.5h4M4.5 6.5h4" stroke="#2a3a80" stroke-width="1"/><path d="M3 7.5h7.5v2.2l-1.8 1.8h-7.4l-0.8-1v-1.5h2.5z" fill="#f0dca8" stroke="#c2915a" stroke-width="1"/><path d="M5 8.5h3" stroke="#3a4a90" stroke-width="1"/></svg><div style="left:1003px;top:53px;width:121px;height:18px;overflow:hidden"><div class="t" style="left:1.6px;top:1px;letter-spacing:-0.103px">n_cst_proxy_formula_liquidacion</div></div><svg style="left:1132px;top:59px" width="9" height="6" viewBox="0 0 9 6" ><path d="M0.5 0.5l3.8 3.8 3.8-3.8" fill="none" stroke="#444" stroke-width="1.1"/></svg><div style="left:1146px;top:51px;width:10px;height:21px;background:#fff;border:1px solid #7a7a7a"></div><div style="left:1148px;top:55px;width:4px;height:14px;background:#1f5fae"></div>
<div style="left:307px;top:72px;width:843px;height:1px;background:#fff"></div><div style="left:307px;top:72px;width:1px;height:141px;background:#fff"></div>
<div class="t" style="left:315.9px;top:75px;letter-spacing:-0.754px">Access</div><div class="t" style="left:593.4px;top:75px;letter-spacing:0.018px">Return Type</div><div class="t" style="left:873.6px;top:75px;letter-spacing:-0.34px">Function Name</div><div class="t" style="left:315.9px;top:114px;letter-spacing:-0.743px">Pass By</div><div class="t" style="left:594.5px;top:114px;letter-spacing:-0.066px">Argument Type</div><div class="t" style="left:873.7px;top:114px;letter-spacing:-0.306px">Argument Name</div><div class="t" style="left:312.2px;top:183px;letter-spacing:-0.178px">Throws:</div>
<div style="left:312px;top:93px;width:280px;height:21px;background:#cccccc;border:1px solid #bfbfbf"></div><div class="t" style="left:315.3px;top:95px;letter-spacing:0.118px;color:#707070">protected</div><svg style="left:578px;top:102px" width="9" height="6" viewBox="0 0 9 6" ><path d="M0.5 0.5l3.8 3.8 3.8-3.8" fill="none" stroke="#a0a0a0" stroke-width="1.1"/></svg><div style="left:592px;top:93px;width:278px;height:21px;background:#fff;border:1px solid #bfbfbf"></div><div style="left:594px;top:96px;width:256px;height:15px;background:#f0f0f0"></div><div class="t" style="left:596.4px;top:95px;letter-spacing:-0.042px;color:#707070">n_cst_json</div><svg style="left:857px;top:102px" width="9" height="6" viewBox="0 0 9 6" ><path d="M0.5 0.5l3.8 3.8 3.8-3.8" fill="none" stroke="#a0a0a0" stroke-width="1.1"/></svg><div style="left:870px;top:92px;width:279px;height:23px;background:#fff;border:1px solid #c4c4c4"></div><div style="left:872px;top:94px;width:275px;height:19px;background:#f0f0f0;border-top:1px solid #696969;border-left:1px solid #696969;border-right:1px solid #e3e3e3;border-bottom:1px solid #e3e3e3"></div><div class="t" style="left:876.4px;top:95px;letter-spacing:-0.123px;color:#707070">of_interface_consume_ws</div>
<div style="left:312px;top:132px;width:280px;height:21px;background:#cccccc;border:1px solid #bfbfbf"></div><div class="t" style="left:315.3px;top:134px;letter-spacing:-0.143px;color:#707070">readonly</div><svg style="left:578px;top:141px" width="9" height="6" viewBox="0 0 9 6" ><path d="M0.5 0.5l3.8 3.8 3.8-3.8" fill="none" stroke="#a0a0a0" stroke-width="1.1"/></svg><div style="left:592px;top:132px;width:278px;height:21px;background:#fff;border:1px solid #bfbfbf"></div><div style="left:594px;top:135px;width:256px;height:15px;background:#f0f0f0"></div><div class="t" style="left:596.4px;top:134px;letter-spacing:0.042px;color:#707070">string</div><svg style="left:857px;top:141px" width="9" height="6" viewBox="0 0 9 6" ><path d="M0.5 0.5l3.8 3.8 3.8-3.8" fill="none" stroke="#a0a0a0" stroke-width="1.1"/></svg><div style="left:870px;top:131px;width:279px;height:23px;background:#fff;border:1px solid #c4c4c4"></div><div style="left:872px;top:133px;width:275px;height:19px;background:#f0f0f0;border-top:1px solid #696969;border-left:1px solid #696969;border-right:1px solid #e3e3e3;border-bottom:1px solid #e3e3e3"></div><div class="t" style="left:876.4px;top:134px;letter-spacing:-0.103px;color:#707070">as_interface_name</div>
<div style="left:312px;top:154px;width:280px;height:21px;background:#cccccc;border:1px solid #bfbfbf"></div><div class="t" style="left:315.3px;top:156px;letter-spacing:-0.143px;color:#707070">readonly</div><svg style="left:578px;top:163px" width="9" height="6" viewBox="0 0 9 6" ><path d="M0.5 0.5l3.8 3.8 3.8-3.8" fill="none" stroke="#a0a0a0" stroke-width="1.1"/></svg><div style="left:592px;top:154px;width:278px;height:21px;background:#fff;border:1px solid #bfbfbf"></div><div style="left:594px;top:157px;width:256px;height:15px;background:#f0f0f0"></div><div class="t" style="left:596.4px;top:156px;letter-spacing:-0.042px;color:#707070">n_cst_json</div><svg style="left:857px;top:163px" width="9" height="6" viewBox="0 0 9 6" ><path d="M0.5 0.5l3.8 3.8 3.8-3.8" fill="none" stroke="#a0a0a0" stroke-width="1.1"/></svg><div style="left:870px;top:153px;width:279px;height:23px;background:#fff;border:1px solid #c4c4c4"></div><div style="left:872px;top:155px;width:275px;height:19px;background:#f0f0f0;border-top:1px solid #696969;border-left:1px solid #696969;border-right:1px solid #e3e3e3;border-bottom:1px solid #e3e3e3"></div><div class="t" style="left:876.4px;top:156px;letter-spacing:-0.14px;color:#707070">auo_json_parm</div>
<div style="left:362px;top:180px;width:386px;height:23px;background:#fff;border:1px solid #c4c4c4"></div><div style="left:364px;top:182px;width:382px;height:19px;background:#f0f0f0;border-top:1px solid #696969;border-left:1px solid #696969;border-right:1px solid #e3e3e3;border-bottom:1px solid #e3e3e3"></div><div class="t" style="left:368.7px;top:183px;letter-spacing:-0.111px;color:#707070">soapexception</div>
<div style="left:307px;top:213px;width:843px;height:1px;background:#fff"></div><svg style="left:312px;top:217px" width="8" height="10" viewBox="0 0 8 10" ><path d="M5.6 1.2l-3.8 3.8 3.8 3.8" fill="none" stroke="#b8b8b8" stroke-width="2"/></svg><div style="left:307px;top:231px;width:843px;height:1px;background:#fff"></div><div style="left:307px;top:232px;width:843px;height:1px;background:#a0a0a0"></div><div style="left:307px;top:233px;width:843px;height:1px;background:#696969"></div>
<div id="code" style="left:307px;top:234px;width:843px;height:300px;background:#fff"></div>
<div style="left:325px;top:234px;width:1px;height:12px;background:#000"></div><div class="t c" style="left:325.4px;top:235px;letter-spacing:-0.063px">n_cst_json luo_json_return</div>
<div class="t c" style="left:325.4px;top:248px;letter-spacing:-0.366px;color:#800080">String</div><div class="t c" style="left:355.3px;top:248px;letter-spacing:-0.078px">ls_return, ls_parm1, ls_parm2</div>
<div class="t c" style="left:325.4px;top:261px;letter-spacing:-1.022px;color:#800080">Long</div><div class="t c" style="left:350.2px;top:261px;letter-spacing:-0.107px">ll_val</div>
<div class="t c" style="left:325.4px;top:287.4px;letter-spacing:0.531px;color:#0000ff;transform:scaleY(1.4);transform-origin:0 6px">//</div><div class="t c" style="font-weight:bold;left:334.00px;top:287.7px;letter-spacing:0.522px;color:#0000ff;transform:scale(1.15,0.8);transform-origin:0 6.6px">==============================================================================</div>
<div class="t c" style="left:325.4px;top:300.4px;letter-spacing:0.531px;color:#0000ff;transform:scaleY(1.4);transform-origin:0 6px">//</div><div class="t c" style="left:335.3px;top:300px;letter-spacing:-0.079px;color:#0000ff">Fecha: 01:31 p.m. miércoles, 06 de marzo de 2019 - carlos.torres@ada.co</div>
<div class="t c" style="left:325.4px;top:313.4px;letter-spacing:0.531px;color:#0000ff;transform:scaleY(1.4);transform-origin:0 6px">//</div><div class="t c" style="left:335.7px;top:313px;letter-spacing:-0.149px;color:#0000ff">Crear la instancia del Endpoint</div>
<div class="t c" style="left:325.4px;top:326.4px;letter-spacing:0.531px;color:#0000ff;transform:scaleY(1.4);transform-origin:0 6px">//</div><div class="t c" style="font-weight:bold;left:334.00px;top:326.7px;letter-spacing:0.522px;color:#0000ff;transform:scale(1.15,0.8);transform-origin:0 6.6px">==============================================================================</div>
<div class="t c" style="left:324.8px;top:339px;letter-spacing:-0.252px">n_ws05_formula_liquidacionsoap lws_consume</div>
<div class="t c" style="left:324.8px;top:352px;letter-spacing:-0.03px">lws_consume = of_create_instance()</div>
<div class="t c" style="left:324.8px;top:378px;letter-spacing:-0.404px;color:#008000">Choose Case</div><div class="t c" style="left:390.4px;top:378px;letter-spacing:-0.031px">lower(as_interface_name)</div>
<div class="t c" style="left:339.8px;top:391px;letter-spacing:-0.723px;color:#008000">Case</div><div class="t c" style="left:366.0px;top:391px;letter-spacing:-0.09px;color:#800000">'of_calcular_formula'</div>
<div class="t c" style="left:354.6px;top:404px;letter-spacing:-0.279px">ls_parm1 =</div><div class="t c" style="left:411.6px;top:404px;letter-spacing:0.024px">auo_json_parm.getattributestring(</div><div class="t c" style="left:577.9px;top:404px;letter-spacing:-0.23px;color:#800000">"as_config"</div><div class="t c" style="left:631.9px;top:404px;letter-spacing:1.291px">)</div>
<div class="t c" style="left:354.6px;top:417px;letter-spacing:-0.279px">ls_parm2 =</div><div class="t c" style="left:411.6px;top:417px;letter-spacing:0.024px">auo_json_parm.getattributestring(</div><div class="t c" style="left:577.9px;top:417px;letter-spacing:-0.145px;color:#800000">"as_data"</div><div class="t c" style="left:625.1px;top:417px;letter-spacing:1.291px">)</div>
<div class="t c" style="left:354.6px;top:430px;letter-spacing:-0.006px">ls_return =</div><div class="t c" style="left:411.6px;top:430px;letter-spacing:-0.179px">lws_consume.ws_calcular(ls_parm1, ls_parm2)</div>
<div class="t c" style="left:324.8px;top:443px;letter-spacing:-0.448px;color:#008000">End Choose</div>
<div class="t c" style="left:324.8px;top:469px;letter-spacing:0.063px">luo_json_return =</div><div class="t c" style="left:414.8px;top:469px;letter-spacing:-0.203px;color:#008000">Create</div><div class="t c" style="left:450.4px;top:469px;letter-spacing:-0.064px">n_cst_json</div>
<div class="t c" style="left:324.8px;top:482px;letter-spacing:0.053px">luo_json_return.parse(ls_return)</div>
<div class="t c" style="left:325.2px;top:495px;letter-spacing:0.034px;color:#008000">return</div><div class="t c" style="left:357.5px;top:495px;letter-spacing:-0.016px">luo_json_return</div>
</div></div>
</body></html>
